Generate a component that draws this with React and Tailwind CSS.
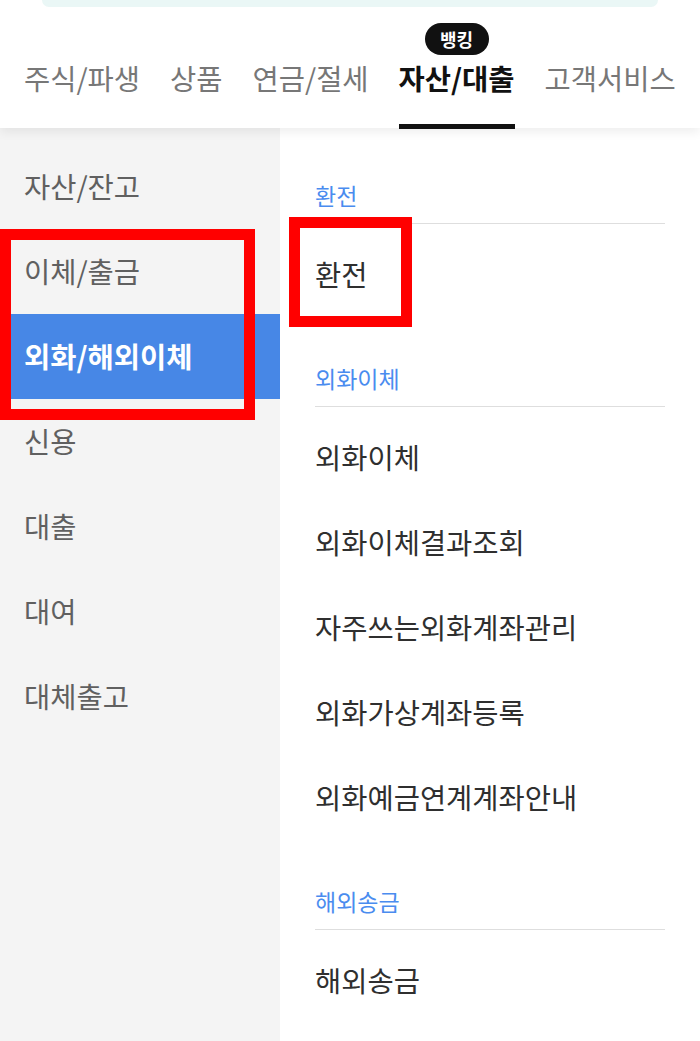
const TABS = [
  { label: '주식/파생' },
  { label: '상품' },
  { label: '연금/절세' },
  { label: '자산/대출', active: true, badge: '뱅킹' },
  { label: '고객서비스' },
];

const SIDE = ['자산/잔고', '이체/출금', '외화/해외이체', '신용', '대출', '대여', '대체출고'];

const SECTIONS = [
  { title: '환전', items: ['환전'] },
  {
    title: '외화이체',
    items: ['외화이체', '외화이체결과조회', '자주쓰는외화계좌관리', '외화가상계좌등록', '외화예금연계계좌안내'],
  },
  { title: '해외송금', items: ['해외송금'] },
];

const font = { fontFamily: '"Noto Sans CJK KR", "Noto Sans", sans-serif' };

export default function App() {
  return (
    <div style={font} className="relative h-[1041px] w-[700px] overflow-hidden bg-white">
      <header className="relative z-10 h-[128px] bg-white shadow-[0_4px_10px_rgba(0,0,0,0.07)]">
        <div className="mx-[42px] h-[7px] rounded-b-[14px] bg-[#eaf7f6]" />
        <nav className="mt-[53px] flex gap-[30px] pl-6">
          {TABS.map((tab) => (
            <div
              key={tab.label}
              className={`relative h-[69px] whitespace-nowrap text-[28.5px] leading-[36px] ${
                tab.active ? 'border-b-[5px] border-[#111] font-bold text-[#111]' : 'text-[#777]'
              }`}
            >
              {tab.badge ? (
                <span className="absolute left-1/2 top-[-37px] flex h-[32px] w-[64px] -translate-x-1/2 items-center justify-center rounded-full bg-[#111] text-[18px] font-bold leading-none text-white">
                  {tab.badge}
                </span>
              ) : null}
              {tab.label}
            </div>
          ))}
        </nav>
      </header>

      <div className="flex h-[913px]">
        <aside className="w-[280px] shrink-0 bg-[#f4f4f4] pt-4">
          {SIDE.map((label) => {
            const on = label === '외화/해외이체';
            return (
              <div
                key={label}
                className={`flex h-[85px] items-center pl-6 text-[28.5px] ${
                  on ? 'bg-[#4787e6] font-bold text-white' : 'text-[#606060]'
                }`}
              >
                {label}
              </div>
            );
          })}
        </aside>

        <main className="flex-1 px-[35px] pt-[6px]">
          {SECTIONS.map((sec) => (
            <section key={sec.title}>
              <div className="border-b border-[#dedede] pb-[14px] pt-[47px] text-[23px] leading-[28px] text-[#4a8cef]">
                {sec.title}
              </div>
              <ul className="pt-2">
                {sec.items.map((item) => (
                  <li key={item} className="flex h-[85px] items-center text-[28.5px] text-[#2f2f2f]">
                    {item}
                  </li>
                ))}
              </ul>
            </section>
          ))}
        </main>
      </div>

      {/* red annotation boxes */}
      <div className="pointer-events-none absolute left-0 top-[229px] h-[191px] w-[255px] border-[11px] border-[#ff0000]" />
      <div className="pointer-events-none absolute left-[289px] top-[217px] h-[110px] w-[123px] border-[11px] border-[#ff0000]" />
    </div>
  );
}
